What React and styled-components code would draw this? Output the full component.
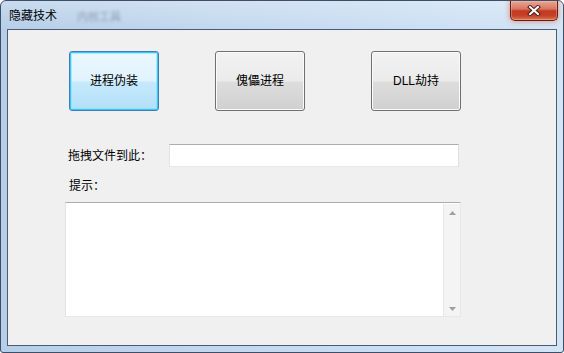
import React from 'react';
import styled, { createGlobalStyle } from 'styled-components';

const Global = createGlobalStyle`
  html, body { margin: 0; padding: 0; background: #ffffff; }
  body { font-family: "Liberation Sans", "Noto Sans CJK SC", sans-serif; }
  * { box-sizing: border-box; }
`;

const Window = styled.div`
  width: 564px;
  height: 353px;
  display: flex;
  flex-direction: column;
  border: 1px solid #3d4e66;
  border-radius: 6px 6px 3px 3px;
  background: linear-gradient(to right, #b6cee8 0%, #c2d7ee 35%, #cadef3 70%, #d3e4f5 100%);
  overflow: hidden;
`;

const TitleBar = styled.div`
  height: 28px;
  display: flex;
  align-items: flex-start;
  background: linear-gradient(to bottom, rgba(255,255,255,0.25), rgba(255,255,255,0));
`;

const Title = styled.span`
  font-size: 12px;
  line-height: 14px;
  margin: 8px 0 0 8px;
  color: #000;
`;

const Ghost = styled.span`
  font-size: 11px;
  line-height: 12px;
  margin: 10px 0 0 20px;
  color: #7d8fa3;
  filter: blur(1.4px);
  opacity: 0.75;
`;

const CloseButton = styled.div`
  margin-left: auto;
  margin-right: 5px;
  width: 48px;
  height: 20px;
  border: 1px solid #5a2218;
  border-top: none;
  border-radius: 0 0 5px 5px;
  background: linear-gradient(to bottom, #e7a896 0%, #d97660 42%, #c4391f 52%, #c4422a 78%, #e0764e 100%);
  box-shadow: 0 0 5px 1px rgba(232, 100, 70, 0.55), inset 0 0 0 1px rgba(255, 200, 180, 0.35);
  display: flex;
  align-items: center;
  justify-content: center;
`;

const Client = styled.div`
  flex: 1;
  margin: 0 6px 6px 6px;
  border: 1px solid #4a5c74;
  background: #f0f0f0;
  display: flex;
  flex-direction: column;
`;

const ButtonRow = styled.div`
  display: flex;
  margin-top: 21px;
  padding-left: 61px;
`;

const PushButton = styled.div`
  width: 90px;
  height: 60px;
  margin-left: ${p => p.$ml || 0}px;
  border: 1px solid ${p => (p.$hot ? '#3c7fb1' : '#707070')};
  border-radius: 3px;
  background: ${p =>
    p.$hot
      ? 'linear-gradient(to bottom, #ebf7fe 0%, #e0f3fd 50%, #c6e9fc 52%, #b2e0f8 100%)'
      : 'linear-gradient(to bottom, #f2f2f2 0%, #ebebeb 50%, #dddddd 52%, #d0d0d0 100%)'};
  box-shadow: ${p =>
    p.$hot
      ? 'inset 0 0 0 1px #3dc6f7, inset 0 0 0 2px rgba(120, 220, 250, 0.5)'
      : 'inset 0 0 0 1px #fbfbfb'};
  display: flex;
  align-items: center;
  justify-content: center;
  font-size: 12px;
  line-height: 14px;
  color: #000;
`;

const FieldRow = styled.div`
  display: flex;
  align-items: center;
  margin-top: 33px;
  padding-left: 60px;
`;

const Label = styled.span`
  width: ${p => p.$w || 'auto'};
  font-size: 12px;
  line-height: 14px;
  color: #000;
`;

const TextBox = styled.div`
  width: 290px;
  height: 23px;
  background: #ffffff;
  border: 1px solid #e3e9ef;
  border-top-color: #abadb3;
  border-left-color: #e2e3ea;
  border-right-color: #dbdfe6;
`;

const HintRow = styled.div`
  margin-top: 12px;
  padding-left: 61px;
  display: flex;
`;

const MemoWrap = styled.div`
  margin-top: 9px;
  padding-left: 57px;
  display: flex;
`;

const Memo = styled.div`
  width: 396px;
  height: 115px;
  background: #ffffff;
  border: 1px solid #e3e9ef;
  border-top-color: #abadb3;
  border-left-color: #e2e3ea;
  display: flex;
`;

const MemoBody = styled.div`
  flex: 1;
`;

const ScrollBar = styled.div`
  width: 17px;
  margin: 1px 0 0 0;
  background: #f4f4f4;
  border-left: 1px solid #e8e8e8;
  display: flex;
  flex-direction: column;
  justify-content: space-between;
  align-items: center;
  padding: 7px 0 5px 0;
`;

const Arrow = ({ down }) => (
  <svg width="7" height="4" viewBox="0 0 7 4">
    {down ? (
      <polygon points="0,0 7,0 3.5,4" fill="#a0a0a0" />
    ) : (
      <polygon points="0,4 7,4 3.5,0" fill="#a0a0a0" />
    )}
  </svg>
);

const CloseGlyph = () => (
  <svg width="14" height="11" viewBox="0 0 14 11">
    <path d="M3 2 L11 9 M11 2 L3 9" stroke="#4a1f19" strokeWidth="4" strokeLinecap="square" />
    <path d="M3 2 L11 9 M11 2 L3 9" stroke="#ffffff" strokeWidth="2" strokeLinecap="square" />
  </svg>
);

export default function App() {
  return (
    <>
      <Global />
      <Window>
        <TitleBar>
          <Title>隐藏技术</Title>
          <Ghost>内核工具</Ghost>
          <CloseButton>
            <CloseGlyph />
          </CloseButton>
        </TitleBar>
        <Client>
          <ButtonRow>
            <PushButton $hot>进程伪装</PushButton>
            <PushButton $ml={56}>傀儡进程</PushButton>
            <PushButton $ml={66}>DLL劫持</PushButton>
          </ButtonRow>
          <FieldRow>
            <Label $w="101px">拖拽文件到此：</Label>
            <TextBox />
          </FieldRow>
          <HintRow>
            <Label>提示：</Label>
          </HintRow>
          <MemoWrap>
            <Memo>
              <MemoBody />
              <ScrollBar>
                <Arrow />
                <Arrow down />
              </ScrollBar>
            </Memo>
          </MemoWrap>
        </Client>
      </Window>
    </>
  );
}
